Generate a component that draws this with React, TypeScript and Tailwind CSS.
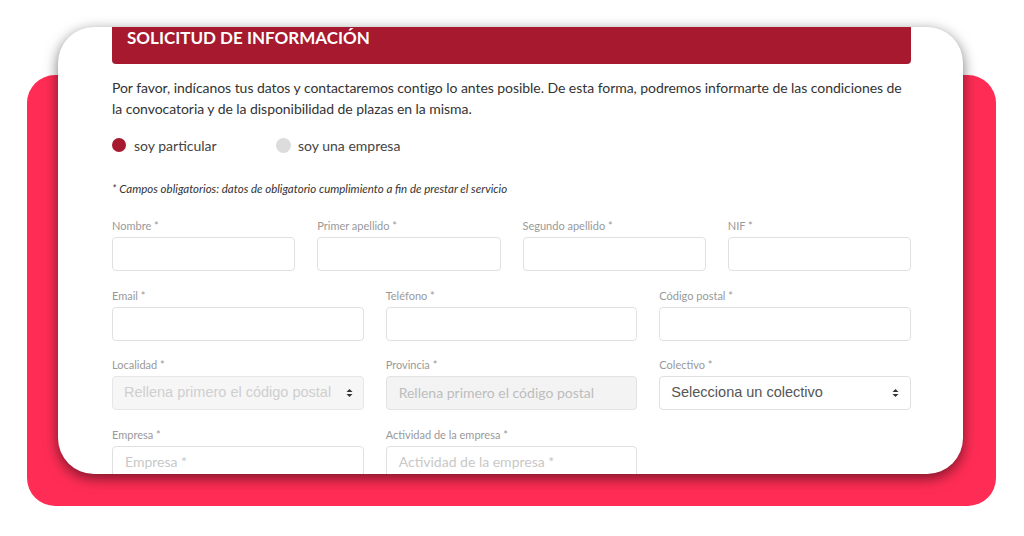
import React from 'react';

const LATO = "font-['Lato','Noto_Sans',sans-serif]";
const ARIAL = "font-['Liberation_Sans',Arial,sans-serif]";

// tiny up/down arrows used by the native-looking selects
const SelectArrows = () => (
  <svg width="7" height="10" viewBox="0 0 7 10" className="shrink-0">
    <path d="M3.5 1 L6.5 4 L0.5 4 Z" fill="#333" />
    <path d="M3.5 9 L6.5 6 L0.5 6 Z" fill="#333" />
  </svg>
);

type FieldProps = {
  label: string;
  kind?: 'input' | 'select' | 'disabled' | 'disabledSelect';
  placeholder?: string;
};

const Field = ({ label, kind = 'input', placeholder }: FieldProps) => {
  let box = null;
  if (kind === 'input') {
    box = (
      <div className="h-[34px] rounded-[4px] border border-[#e0e0e0] bg-white px-3 pb-[3px] flex items-center">
        {placeholder && <span className={`${LATO} text-[14px] text-[#c8c8c8]`}>{placeholder}</span>}
      </div>
    );
  } else if (kind === 'disabled') {
    box = (
      <div className="h-[34px] rounded-[4px] border border-[#e2e2e2] bg-[#f3f3f3] px-3 pb-[2px] flex items-center">
        <span className={`${LATO} text-[14px] text-[#bdbdbd]`}>{placeholder}</span>
      </div>
    );
  } else if (kind === 'disabledSelect') {
    box = (
      <div className="h-[34px] rounded-[4px] border border-[#e6e6e6] bg-[#f6f6f6] pl-[11px] pr-[10px] flex items-center justify-between">
        <span className={`${ARIAL} text-[14.5px] text-[#cfcfcf]`}>{placeholder}</span>
        <SelectArrows />
      </div>
    );
  } else {
    box = (
      <div className="h-[34px] rounded-[4px] border border-[#e0e0e0] bg-white pl-[11px] pr-[11px] flex items-center justify-between">
        <span className={`${ARIAL} text-[14.5px] text-[#555]`}>{placeholder}</span>
        <SelectArrows />
      </div>
    );
  }
  return (
    <div className="flex flex-col">
      <label className={`${LATO} text-[11px] leading-[16px] text-[#999] mb-[3px]`}>{label}</label>
      {box}
    </div>
  );
};

export default function App() {
  return (
    <div className="relative w-[1024px] h-[536px] bg-white overflow-hidden">
      {/* pink backdrop */}
      <div className="ml-[27px] mt-[75px] w-[969px] h-[431px] rounded-[28px] bg-[#ff2d55]" />

      {/* screenshot card laid over the backdrop */}
      <div className="absolute left-[58px] top-[27px] w-[905px] h-[447px] rounded-[36px] bg-white overflow-hidden shadow-[0_4px_14px_rgba(0,0,0,0.55)]">
        <div className="pl-[54px] w-[853px]">
          <div className="h-[37px] rounded-b-[4px] bg-[#a6192e] pl-[15px]">
            <h2 className={`${LATO} font-bold text-[17px] leading-[22px] text-white`}>SOLICITUD DE INFORMACIÓN</h2>
          </div>

          <p className={`${LATO} mt-[13px] text-[14px] tracking-[-0.05px] leading-[21px] text-[#333]`}>
            Por favor, indícanos tus datos y contactaremos contigo lo antes posible. De esta forma, podremos informarte de las condiciones de la convocatoria y de la disponibilidad de plazas en la misma.
          </p>

          <div className={`${LATO} mt-[16px] flex items-center h-[20px] text-[14px] text-[#444]`}>
            <span className="w-[14px] h-[14px] rounded-full bg-[#a6192e]" />
            <span className="ml-[8px] w-[142px]">soy particular</span>
            <span className="w-[15px] h-[15px] rounded-full bg-[#dcdcdc]" />
            <span className="ml-[7px]">soy una empresa</span>
          </div>

          <p className={`${LATO} mt-[26px] italic text-[11.5px] leading-[16px] text-[#333]`}>
            * Campos obligatorios: datos de obligatorio cumplimiento a fin de prestar el servicio
          </p>

          <div className="mt-[21px] flex flex-col gap-[16.5px]">
            <div className="grid grid-cols-4 gap-x-[22px]">
              <Field label="Nombre *" />
              <Field label="Primer apellido *" />
              <Field label="Segundo apellido *" />
              <Field label="NIF *" />
            </div>
            <div className="grid grid-cols-3 gap-x-[22px]">
              <Field label="Email *" />
              <Field label="Teléfono *" />
              <Field label="Código postal *" />
            </div>
            <div className="grid grid-cols-3 gap-x-[22px]">
              <Field label="Localidad *" kind="disabledSelect" placeholder="Rellena primero el código postal" />
              <Field label="Provincia *" kind="disabled" placeholder="Rellena primero el código postal" />
              <Field label="Colectivo *" kind="select" placeholder="Selecciona un colectivo" />
            </div>
            <div className="grid grid-cols-3 gap-x-[22px]">
              <Field label="Empresa *" placeholder="Empresa *" />
              <Field label="Actividad de la empresa *" placeholder="Actividad de la empresa *" />
            </div>
          </div>
        </div>
      </div>
    </div>
  );
}
